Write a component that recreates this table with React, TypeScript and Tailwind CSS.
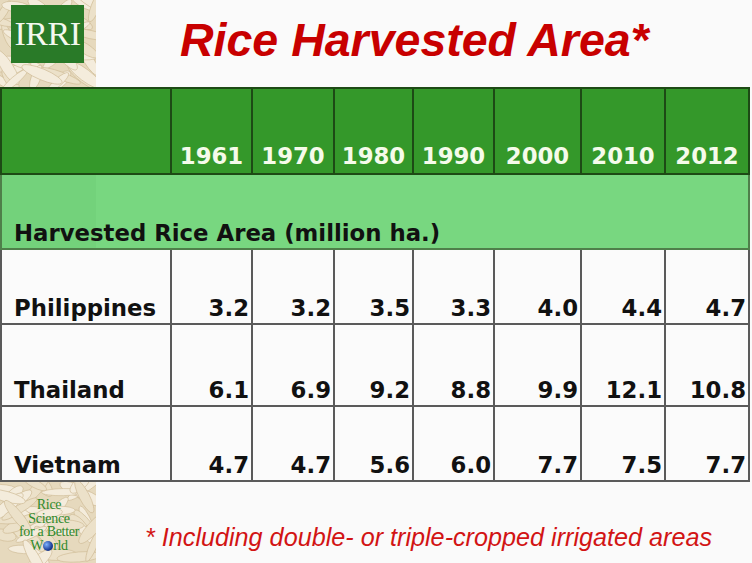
import React from "react";

const years = ["1961", "1970", "1980", "1990", "2000", "2010", "2012"];

const rows: { country: string; values: string[]; height: string }[] = [
  { country: "Philippines", values: ["3.2", "3.2", "3.5", "3.3", "4.0", "4.4", "4.7"], height: "h-[75px]" },
  { country: "Thailand", values: ["6.1", "6.9", "9.2", "8.8", "9.9", "12.1", "10.8"], height: "h-[82px]" },
  { country: "Vietnam", values: ["4.7", "4.7", "5.6", "6.0", "7.7", "7.5", "7.7"], height: "h-[75px]" },
];

const colWidths = ["w-[170px]", "w-[81px]", "w-[82px]", "w-[79px]", "w-[81px]", "w-[87px]", "w-[84px]", "w-[84px]"];

// small seeded random so the rice grains stay put between renders
function makeRng(seed: number) {
  let s = seed;
  return () => {
    s = (s * 16807) % 2147483647;
    return (s - 1) / 2147483646;
  };
}

function RiceGrains({ width, height, seed }: { width: number; height: number; seed: number }) {
  const rnd = makeRng(seed);
  const grains = Array.from({ length: 46 }, () => ({
    cx: rnd() * width,
    cy: rnd() * height,
    rx: 12 + rnd() * 10,
    ry: 3.5 + rnd() * 2.5,
    rot: -70 + rnd() * 140,
    light: rnd() > 0.4,
  }));
  return (
    <svg className="absolute inset-0" width={width} height={height} viewBox={`0 0 ${width} ${height}`}>
      <rect width={width} height={height} fill="#e6d9bd" />
      {grains.map((g, i) => (
        <ellipse
          key={i}
          cx={g.cx}
          cy={g.cy}
          rx={g.rx}
          ry={g.ry}
          transform={`rotate(${g.rot} ${g.cx} ${g.cy})`}
          fill={g.light ? "#f4ecdc" : "#ece1c9"}
          stroke="#cdb993"
          strokeWidth={0.6}
        />
      ))}
    </svg>
  );
}

export default function App() {
  return (
    <div className="w-[752px] h-[563px] bg-[#fafafa] flex flex-col overflow-hidden">
      <div className="flex h-[87px] shrink-0">
        <div className="relative w-[96px] h-full">
          <RiceGrains width={96} height={87} seed={7} />
          <div className="relative ml-[11px] mt-[5px] w-[73px] h-[58px] bg-[#297a28] flex items-center justify-center">
            <span className="font-['Liberation_Serif'] text-[34px] leading-none text-[#f4f8ef] tracking-[-0.5px]">
              IRRI
            </span>
          </div>
        </div>
        <div className="flex-1 pl-[84px] pt-[13px]">
          <h1 className="font-['Liberation_Sans'] italic font-bold text-[46.5px] leading-[54px] text-[#c80000]">
            Rice Harvested Area*
          </h1>
        </div>
      </div>

      <table className="table-fixed border-collapse w-[749px] font-['DejaVu_Sans'] font-bold text-[22.8px] leading-[22px]">
        <colgroup>
          {colWidths.map((w, i) => (
            <col key={i} className={w} />
          ))}
        </colgroup>
        <tbody>
          <tr className="h-[86px] bg-[#34982a] text-[#f5fbea]">
            <td className="border-2 border-[#1d4a15]" />
            {years.map((y) => (
              <td key={y} className="border-2 border-[#1d4a15] align-bottom text-center pb-[6px]">
                {y}
              </td>
            ))}
          </tr>
          <tr className="h-[75px]">
            <td
              colSpan={8}
              className="border-2 border-[#4f7f4a] align-bottom pl-[12px] pb-[4px] text-[#111] bg-[linear-gradient(90deg,#73d27b_0,#73d27b_94px,#78d780_94px)]"
            >
              Harvested Rice Area (million ha.)
            </td>
          </tr>
          {rows.map((r) => (
            <tr key={r.country} className={`${r.height} bg-[#fbfbfb] text-[#111]`}>
              <td className="border-2 border-[#5a5a5a] align-bottom pl-[12px] pb-[4px]">{r.country}</td>
              {r.values.map((v, i) => (
                <td key={i} className="border-2 border-[#5a5a5a] align-bottom text-right pr-[2px] pb-[4px]">
                  {v}
                </td>
              ))}
            </tr>
          ))}
        </tbody>
      </table>

      <div className="flex flex-1">
        <div className="relative w-[96px] h-full">
          <RiceGrains width={96} height={83} seed={31} />
          <div className="relative flex flex-col items-center pt-[16px] pl-[2px] font-['Liberation_Serif'] text-[14px] leading-[13.5px] text-[#2f8a2c] tracking-[-0.3px]">
            <span>Rice</span>
            <span>Science</span>
            <span>for a Better</span>
            <span className="flex items-end">
              W
              <span className="inline-block w-[10px] h-[10px] rounded-full mb-[1px] bg-[radial-gradient(circle_at_35%_35%,#7fb2ff,#1d3f9a_60%,#0b1a4a)]" />
              rld
            </span>
          </div>
        </div>
        <div className="flex-1 pl-[49px] pt-[40px]">
          <p className="font-['Liberation_Sans'] italic text-[25.2px] leading-[30px] text-[#d21414]">
            * Including double- or triple-cropped irrigated areas
          </p>
        </div>
      </div>
    </div>
  );
}
